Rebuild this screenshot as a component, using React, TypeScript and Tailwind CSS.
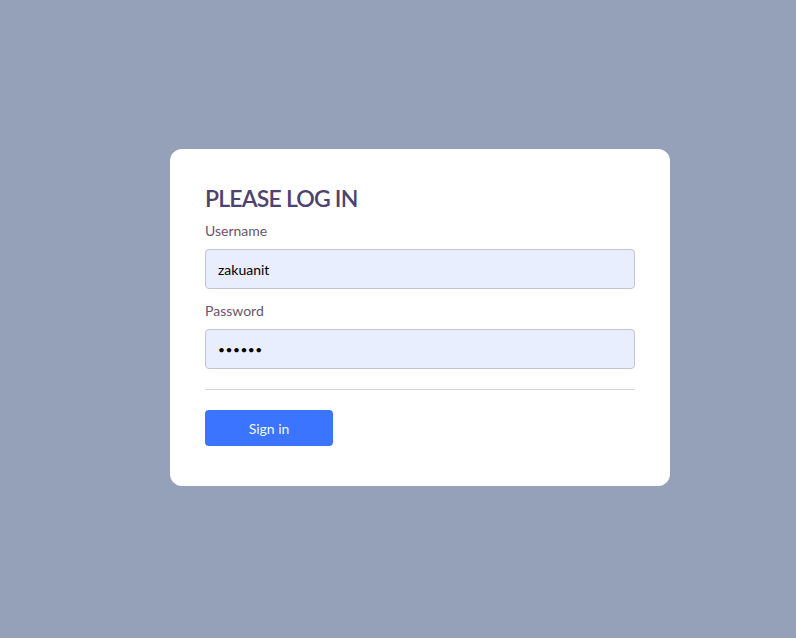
export default function App() {
  return (
    <div className="min-h-screen w-full bg-[#95a1b9] flex items-start justify-center pt-[149px] pl-[44px] font-['Lato',sans-serif]">
      <div className="w-[500px] bg-white rounded-[12px] px-[35px] pt-[34px] pb-[40px]">
        <h1 className="text-[23px] leading-[30px] font-semibold text-[#4e4270] tracking-[-0.8px]">PLEASE LOG IN</h1>
        <form className="mt-[9px]">
          <label className="block text-[14px] leading-[18px] text-[#6a5470]">Username</label>
          <input
            type="text"
            defaultValue="zakuanit"
            className="mt-[9px] block w-full h-[40px] rounded-[4px] border border-[#c3c3d3] bg-[#e8eefd] px-[12px] text-[14px] text-black outline-none"
          />
          <label className="block mt-[13px] text-[14px] leading-[18px] text-[#6a5470]">Password</label>
          <input
            type="password"
            defaultValue="123456"
            className="mt-[9px] block w-full h-[40px] rounded-[4px] border border-[#c3c3d3] bg-[#e8eefd] px-[12px] text-[12px] tracking-[0.5px] text-black outline-none"
          />
          <hr className="mt-[20px] border-t border-[#d4d4dc]" />
          <button
            type="button"
            className="mt-[20px] w-[128px] h-[36px] rounded-[4px] bg-[#3b74ff] text-[14px] text-[#f4f6ff]"
          >
            Sign in
          </button>
        </form>
      </div>
    </div>
  );
}
